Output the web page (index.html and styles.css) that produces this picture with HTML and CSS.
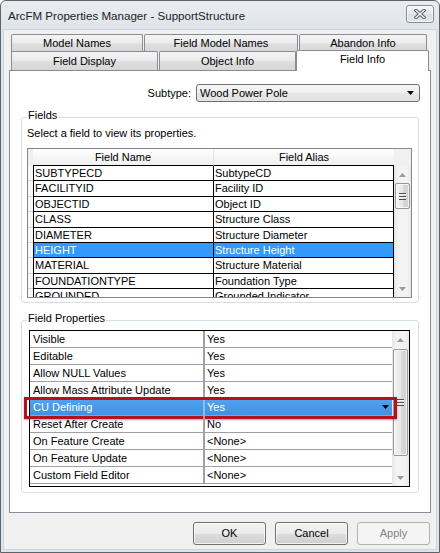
FILE: index.html
```html
<!DOCTYPE html>
<html>
<head>
<meta charset="utf-8">
<link rel="stylesheet" href="styles.css">
</head>
<body>
<div class="window">
  <div class="titlebar">
    <span class="title">ArcFM Properties Manager - SupportStructure</span>
    <div class="close">
      <svg width="12" height="10" viewBox="0 0 12 10"><path d="M2 1.5 L10 8.5 M10 1.5 L2 8.5" stroke="#5a6169" stroke-width="3.4" stroke-linecap="square" fill="none"/><path d="M2 1.5 L10 8.5 M10 1.5 L2 8.5" stroke="#f4f6f8" stroke-width="1.4" stroke-linecap="square" fill="none"/></svg>
    </div>
  </div>
  <div class="client">
    <div class="tabs">
      <div class="tabrow back">
        <div class="tab w-model">Model Names</div>
        <div class="tab w-fmn">Field Model Names</div>
        <div class="tab w-abandon">Abandon Info</div>
      </div>
      <div class="tabrow front">
        <div class="tab w-display">Field Display</div>
        <div class="tab w-object">Object Info</div>
        <div class="tab selected w-info">Field Info</div>
      </div>
    </div>
    <div class="page">
      <div class="subtype-row">
        <span class="lbl">Subtype:</span>
        <div class="combo">
          <span>Wood Power Pole</span>
          <svg class="combo-arrow" width="7" height="4" viewBox="0 0 7 4"><path d="M0 0 H7 L3.5 4 Z" fill="#000"/></svg>
        </div>
      </div>

      <fieldset class="group fields">
        <legend>Fields</legend>
        <div class="hint">Select a field to view its properties.</div>
        <div class="fgrid">
          <div class="fhead">
            <div class="rh-h"></div>
            <div class="hc c-name">Field Name</div>
            <div class="hc c-alias">Field Alias</div>
            <div class="hc-blank"></div>
          </div>
          <div class="fbody">
            <div class="frows">
              <div class="frow"><div class="rh"></div><div class="fc c-name">SUBTYPECD</div><div class="fc c-alias">SubtypeCD</div></div>
              <div class="frow"><div class="rh"></div><div class="fc c-name">FACILITYID</div><div class="fc c-alias">Facility ID</div></div>
              <div class="frow"><div class="rh"></div><div class="fc c-name">OBJECTID</div><div class="fc c-alias">Object ID</div></div>
              <div class="frow"><div class="rh"></div><div class="fc c-name">CLASS</div><div class="fc c-alias">Structure Class</div></div>
              <div class="frow"><div class="rh"></div><div class="fc c-name">DIAMETER</div><div class="fc c-alias">Structure Diameter</div></div>
              <div class="frow sel"><div class="rh"></div><div class="fc c-name">HEIGHT</div><div class="fc c-alias">Structure Height</div></div>
              <div class="frow"><div class="rh"></div><div class="fc c-name">MATERIAL</div><div class="fc c-alias">Structure Material</div></div>
              <div class="frow"><div class="rh"></div><div class="fc c-name">FOUNDATIONTYPE</div><div class="fc c-alias">Foundation Type</div></div>
              <div class="frow"><div class="rh"></div><div class="fc c-name">GROUNDED</div><div class="fc c-alias">Grounded Indicator</div></div>
            </div>
            <div class="vscroll">
              <div class="sb-arrow"><svg width="7" height="4" viewBox="0 0 7 4"><path d="M0 4 H7 L3.5 0 Z" fill="#9a9a9a"/></svg></div>
              <div class="sb-thumb t-fields"><span class="grip"></span></div>
              <div class="sb-space"></div>
              <div class="sb-arrow"><svg width="7" height="4" viewBox="0 0 7 4"><path d="M0 0 H7 L3.5 4 Z" fill="#9a9a9a"/></svg></div>
            </div>
          </div>
        </div>
      </fieldset>

      <fieldset class="group props">
        <legend>Field Properties</legend>
        <div class="pgrid">
          <div class="prows">
            <div class="prow"><div class="pc p-name">Visible</div><div class="pc p-val">Yes</div></div>
            <div class="prow"><div class="pc p-name">Editable</div><div class="pc p-val">Yes</div></div>
            <div class="prow"><div class="pc p-name">Allow NULL Values</div><div class="pc p-val">Yes</div></div>
            <div class="prow"><div class="pc p-name">Allow Mass Attribute Update</div><div class="pc p-val">Yes</div></div>
            <div class="prow sel">
              <div class="pc p-name">CU Defining</div>
              <div class="pc p-val"><span>Yes</span><svg class="drop" width="7" height="4" viewBox="0 0 7 4"><path d="M0 0 H7 L3.5 4 Z" fill="#000"/></svg></div>
              <div class="highlight-box"></div>
            </div>
            <div class="prow"><div class="pc p-name">Reset After Create</div><div class="pc p-val">No</div></div>
            <div class="prow"><div class="pc p-name">On Feature Create</div><div class="pc p-val">&lt;None&gt;</div></div>
            <div class="prow"><div class="pc p-name">On Feature Update</div><div class="pc p-val">&lt;None&gt;</div></div>
            <div class="prow"><div class="pc p-name">Custom Field Editor</div><div class="pc p-val">&lt;None&gt;</div></div>
          </div>
          <div class="vscroll">
            <div class="sb-arrow"><svg width="7" height="4" viewBox="0 0 7 4"><path d="M0 4 H7 L3.5 0 Z" fill="#9a9a9a"/></svg></div>
            <div class="sb-thumb t-props"><span class="grip"></span></div>
            <div class="sb-space"></div>
            <div class="sb-arrow"><svg width="7" height="4" viewBox="0 0 7 4"><path d="M0 0 H7 L3.5 4 Z" fill="#9a9a9a"/></svg></div>
          </div>
        </div>
      </fieldset>
    </div>
    <div class="footer">
      <div class="btn">OK</div>
      <div class="btn">Cancel</div>
      <div class="btn disabled">Apply</div>
    </div>
  </div>
</div>
</body>
</html>
```
FILE: styles.css
```css
* { box-sizing: border-box; }
html, body { margin: 0; padding: 0; }
body {
  width: 440px;
  height: 553px;
  overflow: hidden;
  font-family: "Liberation Sans", Arial, sans-serif;
  font-size: 11px;
  color: #000;
  background: #ffffff;
}
.window {
  width: 440px;
  height: 553px;
  border: 1px solid #5f6368;
  border-radius: 6px 6px 0 0;
  background: linear-gradient(#e9edf1, #dfe4ea 30px, #dfe4ea);
  display: flex;
  flex-direction: column;
}
.titlebar {
  height: 28px;
  display: flex;
  align-items: center;
  padding: 0 5px 0 7px;
  flex: none;
}
.title {
  font-size: 11.6px;
  color: #222;
  padding-top: 1px;
}
.close {
  margin-left: auto;
  align-self: flex-start;
  margin-top: 4px;
  width: 28px;
  height: 18px;
  border: 1px solid #858d97;
  border-radius: 3px;
  background: linear-gradient(#f5f7f9, #e4e9ee 50%, #d9dfe6 51%, #e1e6ec);
  display: flex;
  align-items: center;
  justify-content: center;
  box-shadow: inset 0 0 0 1px rgba(255,255,255,0.6);
}
.client {
  flex: 1;
  margin: 0 2px 2px 2px;
  border: 1px solid #c9d6e3;
  background: #f0f0f0;
  padding: 4px 5px 0 5px;
  display: flex;
  flex-direction: column;
}
/* tabs */
.tabs { flex: none; position: relative; z-index: 2; }
.tabrow { display: flex; margin-left: 2px; }
.tabrow.back { height: 17px; }
.tabrow.front { height: 19px; }
.tab {
  border: 1px solid #898c95;
  border-bottom: none;
  border-radius: 2px 2px 0 0;
  background: linear-gradient(#f4f4f4, #ececec 45%, #dedede 55%, #d6d6d6);
  text-align: center;
  line-height: 16px;
  white-space: nowrap;
  margin-right: 1px;
}
.back .tab { height: 18px; }
.front .tab { height: 19px; line-height: 18px; }
.w-model { width: 132px; }
.w-fmn { width: 154px; }
.w-abandon { width: 128px; }
.w-display { width: 147px; }
.w-object { width: 137px; margin-right: 0; }
.w-info { width: 133px; }
.tab.selected {
  background: #ffffff;
  height: 21px;
  margin-top: -1px;
  line-height: 16px;
  position: relative;
}
.page {
  flex: 1;
  background: #ffffff;
  border: 1px solid #898c95;
  padding-top: 13px;
  display: flex;
  flex-direction: column;
  position: relative;
  z-index: 1;
}
.subtype-row {
  height: 18px;
  display: flex;
  align-items: center;
  justify-content: flex-end;
  padding-right: 10px;
  gap: 5px;
}
.combo {
  width: 224px;
  height: 18px;
  border: 1px solid #707070;
  border-radius: 3px;
  background: linear-gradient(#f6f6f6, #efefef 50%, #e6e6e6 51%, #e3e3e3);
  display: flex;
  align-items: center;
  padding: 0 5px 0 3px;
}
.combo-arrow { margin-left: auto; }

/* group boxes */
.group {
  margin: 0 11px;
  border: 1px solid #d5dfe5;
  border-radius: 3px;
  padding: 0 6px 4px 5px;
  min-width: 0;
}
.group legend {
  padding: 0 1px 3px 1px;
  margin-left: 0;
  line-height: 13px;
}
.fields { margin-top: 7px; }
.props { margin-top: 9px; padding-bottom: 5px; }
.hint { line-height: 13px; margin-top: 2px; }

/* fields grid */
.fgrid {
  margin-top: 8px;
  border: 1px solid #828790;
  background: #f0f0f0;
  display: flex;
  flex-direction: column;
}
.fhead { display: flex; height: 17px; }
.rh-h { width: 5px; background: #f0f0f0; }
.hc {
  background: linear-gradient(#ffffff, #f7f7f7 50%, #f0f0f0);
  border-bottom: 1px solid #000;
  text-align: center;
  line-height: 16px;
}
.fhead .c-name { width: 181px; border-right: 1px solid #e3e3e3; }
.fhead .c-alias { width: 180px; }
.hc-blank { width: 17px; background: #f0f0f0; }
.fbody { display: flex; height: 131px; }
.frows { width: 366px; overflow: hidden; }
.frow { display: flex; height: 15.4px; }
.rh {
  width: 5px;
  background: #f7f7f7;
  border-bottom: 1px solid #d6d6d6;
}
.fc {
  background: #ffffff;
  border-bottom: 1px solid #000;
  border-right: 1px solid #000;
  padding-left: 1px;
  line-height: 14.4px;
  white-space: nowrap;
  overflow: hidden;
}
.frow .c-name { width: 181px; border-left: 1px solid #000; }
.frow .c-alias { width: 180px; }
.frow.sel .fc { background: #3399ff; color: #ffffff; }

/* scrollbars */
.vscroll {
  width: 17px;
  display: flex;
  flex-direction: column;
  background: linear-gradient(to right, #e6e6e6, #f3f3f3 25%, #f3f3f3 75%, #e9e9e9);
  position: relative;
}
.sb-arrow {
  height: 17px;
  flex: none;
  display: flex;
  align-items: center;
  justify-content: center;
}
.sb-space { flex: 1; }
.sb-thumb {
  flex: none;
  margin: 1px 1px 0 1px;
  border: 1px solid #989898;
  border-radius: 2px;
  background: linear-gradient(to right, #f3f3f3, #e8e8e8 50%, #d8d8d8 51%, #d2d2d2);
  display: flex;
  align-items: center;
  justify-content: center;
  box-shadow: inset 0 0 0 1px rgba(255,255,255,0.7);
}
.t-fields { height: 26px; margin-top: 0; }
.t-props { height: 107px; }
.grip {
  width: 7px;
  height: 7px;
  background: linear-gradient(#4f4f4f 0 1px, #f6f6f6 1px 2px, transparent 2px 3px, #4f4f4f 3px 4px, #f6f6f6 4px 5px, transparent 5px 6px, #4f4f4f 6px 7px);
}

/* properties grid */
.pgrid {
  margin: 2px 2px 0 2px;
  border: 1px solid #000;
  background: #ffffff;
  display: flex;
  height: 157px;
}
.prows { width: 362px; position: relative; z-index: 3; }
.prow { display: flex; height: 17px; position: relative; }
.pc {
  border-bottom: 1px solid #a0a0a0;
  line-height: 16px;
  white-space: nowrap;
  overflow: hidden;
}
.p-name { width: 175px; border-right: 2px solid #a0a0a0; padding-left: 3px; }
.p-val { width: 187px; padding-left: 2px; display: flex; align-items: center; }
.prow.sel .pc {
  background: linear-gradient(#52a2ee, #3e93e6);
  color: #ffffff;
}
.prow.sel .p-name { border-right-color: #8cbdee; }
.drop { margin-left: auto; margin-right: 3px; }
.highlight-box {
  position: absolute;
  left: -6px;
  right: -5px;
  top: -2px;
  bottom: -3px;
  border: 3px solid #b3121c;
  box-shadow: 0 1px 2px rgba(0,0,0,0.35);
  pointer-events: none;
}

/* footer buttons */
.footer {
  flex: none;
  height: 36px;
  padding: 9px 1px 4px 0;
  display: flex;
  justify-content: flex-end;
  gap: 9px;
}
.btn {
  width: 73px;
  height: 23px;
  border: 1px solid #707070;
  border-radius: 3px;
  background: linear-gradient(#f2f2f2, #ebebeb 50%, #dddddd 51%, #cfcfcf);
  box-shadow: inset 0 0 0 1px rgba(255,255,255,0.7);
  text-align: center;
  line-height: 21px;
}
.btn.disabled {
  border-color: #adb2b5;
  background: #f4f4f4;
  color: #838383;
  box-shadow: none;
}
```
